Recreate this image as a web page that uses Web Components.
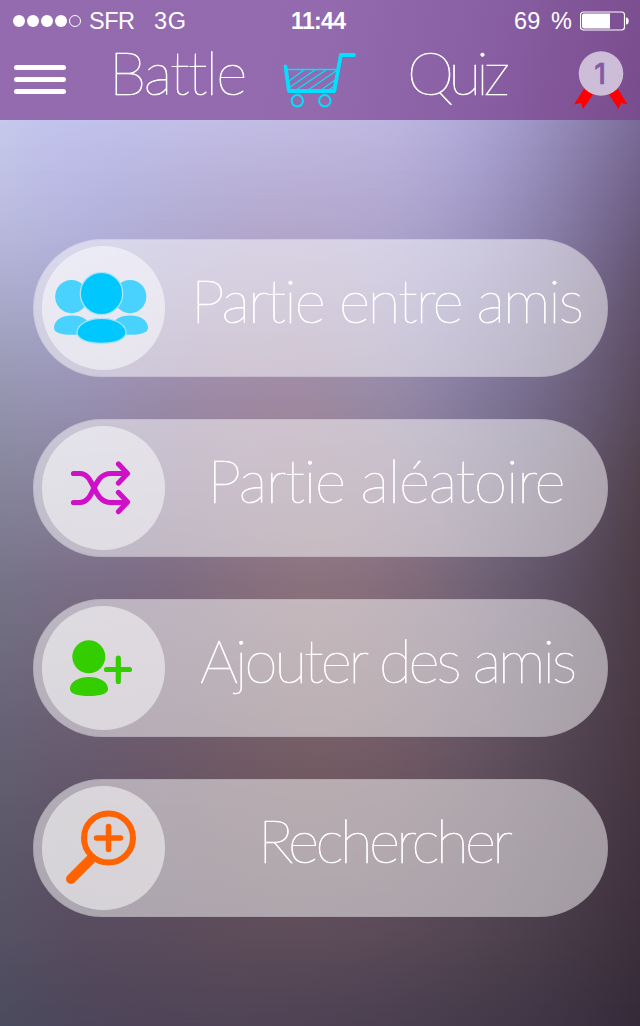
<!DOCTYPE html>
<html lang="fr">
<head>
<meta charset="utf-8">
<title>Battle Quiz</title>
<style>
html,body{margin:0;height:100%}
body{overflow:hidden;font-family:Lato,sans-serif;color:#fff}
</style>
</head>
<body>
<quiz-app></quiz-app>
<script>
const define = (name, html, setup) => customElements.define(name, class extends HTMLElement {
  connectedCallback() {
    if (this.shadowRoot) return;
    const t = document.createElement('template');
    t.innerHTML = html;
    this.attachShadow({ mode: 'open' }).append(t.content.cloneNode(true));
    if (setup) setup.call(this, this.shadowRoot);
  }
});

// Spreads the letters so that the line takes the requested width.
define('fit-text', `<style>
:host{display:block;white-space:pre;flex:none}
span{display:inline-block}
</style><span><slot></slot></span>`, function (root) {
  const s = root.querySelector('span'), w = +this.getAttribute('width');
  const n = this.textContent.length;
  s.style.letterSpacing = (w - s.getBoundingClientRect().width) / (n - 1) + 'px';
  s.style.display = 'inline';
  this.style.width = w + 'px';
});

// Soft backdrop: horizontal colour rows blended vertically into each other.
define('soft-backdrop', `<style>
:host{display:block;position:absolute;inset:0;z-index:-1}
div{position:absolute;inset:0}
</style>`, function (root) {
  const rows = [
    [120, 'c6c8ec bfc1ee c2bfe8 c2bde5 c1bae2 beb7e0 aea7d8 968cba 796b98'],
    [220, 'bbbde0 b4b3e0 b2aed6 b3a9ce b4a8cd b0a7d0 a198c6 867da8 6a5b80'],
    [310, 'a6a7c6 a9a7d0 a69cc0 aa9bb8 a899b6 a098c0 8f86ae 7a7094 604f68'],
    [400, '9494ae 9790b2 9888a6 a088a2 9d879c 948aa9 80779a 6f6684 5a4a5d'],
    [490, '84839a 8a829f 8a7a98 957f92 987f8e 8e7c92 7b7089 665a72 504049'],
    [580, '787588 7c6f88 7e6c84 877282 917780 876f7e 73657a 5e5166 4b3b46'],
    [760, '625e70 67586c 6a5767 70585f 745c62 70585f 645260 534450 473842'],
    [940, '545062 56495c 584a5b 5b4b59 5c4b59 584858 50434e 473a48 3c2f3b'],
    [1026,'4b4b5e 4d465a 4f4458 504456 4e4254 4a3f50 453a4a 3e3444 342a39']];
  const rgb = h => [0, 2, 4].map(k => parseInt(h.substr(k, 2), 16));
  // Cubic B-spline weights keep the colour transitions free of visible edges.
  const smooth = (list, p) => {
    const i = Math.floor(p), t = p - i, n = list.length - 1;
    const at = k => k < 0 ? list[0].map((v, c) => 2 * v - list[1][c])
      : k > n ? list[n].map((v, c) => 2 * v - list[n - 1][c]) : list[k];
    const w = [(1 - t) ** 3, 3 * t ** 3 - 6 * t * t + 4, -3 * t ** 3 + 3 * t * t + 3 * t + 1, t ** 3];
    return list[0].map((_, c) => w.reduce((s, f, j) => s + f * at(Math.min(i - 1 + j, n + 1))[c], 0) / 6);
  };
  const fine = rows.map(([y, c]) => {
    const list = c.split(' ').map(rgb);
    return Array.from({ length: 33 }, (_, k) => smooth(list, k / 4)).flat();
  });
  let last = 0;
  for (let k = 0; k <= 32; k++) {
    const p = k / 4, i = Math.min(Math.floor(p), 7);
    const y = rows[i][0] + (rows[i + 1][0] - rows[i][0]) * (p - i);
    const v = smooth(fine, p), stops = [];
    for (let x = 0; x < v.length; x += 3) stops.push(`rgb(${v.slice(x, x + 3).map(n => n.toFixed(1)).join(' ')})`);
    const d = document.createElement('div');
    d.style.background = `linear-gradient(90deg,${stops})`;
    if (k) d.style.maskImage = `linear-gradient(transparent ${last}px,#000 ${y}px)`;
    last = y;
    root.append(d);
  }
});

define('status-bar', `<style>
:host{display:flex;height:41px;align-items:center;box-sizing:border-box;padding:0 11px 0 13px;font:23.5px "Liberation Sans",Arial,sans-serif}
.dots{display:flex;gap:2px;margin-right:8px}
.dots i{width:12px;height:12px;border-radius:50%;background:#fff;box-sizing:border-box}
.dots i:last-child{background:none;border:1px solid #fff;width:12px}
fit-text{padding-top:1px}
.net{margin-left:19px}.time{font-weight:bold;font-size:23px;margin-left:105px}.pct{margin-left:168px;word-spacing:4px}
svg{margin-left:auto;flex:none}
</style>
<div class="dots"><i></i><i></i><i></i><i></i><i></i></div>
<fit-text width="46">SFR</fit-text><fit-text class="net" width="32">3G</fit-text>
<fit-text class="time" width="55">11:44</fit-text><fit-text class="pct" width="58">69 %</fit-text>
<svg width="49" height="20" viewBox="0 0 49 20"><rect x=".5" y="1" width="44" height="18" rx="3" fill="none" stroke="#fff" stroke-width="1.200"/><path d="M2 4.500Q2 2.500 4 2.500H30V17.500H4Q2 17.500 2 15.500ZM46 6.500C49.700 6.500 49.700 13.500 46 13.500Z" fill="#fff"/></svg>`);

define('cart-icon', `<style>:host{display:block;flex:none}svg{display:block}</style>
<svg width="74" height="58" viewBox="283 51 74 58" fill="none" stroke="#00e1ff" stroke-linecap="round" stroke-linejoin="round">
<path d="M285.500 66.500L289 91H334.300L340.800 55H354" stroke-width="3.800"/>
<path d="M287 69.500H337M289 81L304 70M290 87L315 70M296 90L326 70M308 90L336 71M321 90L335 80M329 90L334 86" stroke-width="1.300"/>
<circle cx="297.300" cy="100.700" r="5.700" stroke-width="2"/><circle cx="324.800" cy="100.700" r="5.700" stroke-width="2"/></svg>`);

define('rank-badge', `<style>
:host{display:block;width:54px;height:60px;flex:none}
svg{display:block}
svg text{font:500 28px Inter,sans-serif}
</style>
<svg width="54" height="60" viewBox="574 51 54 60"><path d="M584.500 88L593 94.500 583 109 581 103 574 104.500ZM617.500 88L609 94.500 618.500 109 621 103 627.500 104.500Z" fill="#f00"/><circle cx="601" cy="73.500" r="22.300" fill="#cdbdd8"/>
<text x="600" y="83.500" text-anchor="middle" fill="#855aa2" stroke="#855aa2" stroke-width=".6">1</text></svg>`);

define('title-bar', `<style>
:host{display:flex;height:79px;align-items:flex-start;padding:0 12px 0 14px;box-sizing:border-box}
.menu{width:52px;padding-top:24px;display:flex;flex-direction:column;gap:7px;flex:none}
.menu i{height:5px;border-radius:3px;background:#fff}
fit-text{font:100 60px/60px Lato,sans-serif;padding-top:1px;-webkit-text-stroke:.7px #fff}
.b{margin-left:43px}.q{margin-left:50px}
cart-icon{margin:10px 0 0 37px}rank-badge{margin:10px 0 0 64px}
</style>
<div class="menu"><i></i><i></i><i></i></div>
<fit-text class="b" width="137">Battle</fit-text><cart-icon></cart-icon>
<fit-text class="q" width="103">Quiz</fit-text><rank-badge></rank-badge>`);

define('menu-pill', `<style>
:host{display:flex;box-sizing:border-box;width:575px;height:138px;border-radius:69px;background:rgba(255,255,255,.5);align-items:center;position:relative}
:host::after{content:"";position:absolute;inset:0;border-radius:69px;border:1px solid rgba(120,100,150,.1)}
.disc{width:123.500px;height:123.500px;border-radius:50%;margin-left:8.500px;background:rgba(255,255,255,.5);flex:none}
.label{flex:1;display:flex;font:100 60px/60px Lato,sans-serif;padding:0 0 17px var(--start);-webkit-text-stroke:.7px #fff}
::slotted(svg){display:block;width:100%;height:100%}
</style><div class="disc"><slot name="icon"></slot></div><div class="label"><slot></slot></div>`);

define('quiz-app', `<style>
:host{display:block;position:relative;width:640px;height:1026px;overflow:hidden;isolation:isolate}
header{height:120px;background:linear-gradient(100deg,#936bae 0,#926aad 50%,#8a60a5 73%,#794c8d 100%)}
main{display:flex;flex-direction:column;gap:42px;padding:119px 0 0 33px}
</style>
<soft-backdrop></soft-backdrop>
<header><status-bar></status-bar><title-bar></title-bar></header>
<main>
<menu-pill style="--start:26px"><svg slot="icon" viewBox="42 246 123.500 123.500">
<g fill="#48d2fd"><ellipse cx="71.500" cy="296.600" rx="16.300" ry="16.600"/><ellipse cx="130" cy="296.600" rx="16.300" ry="16.600"/><path d="M54 328C54 320 62 315.500 72 315.500C82 315.500 90 320 90 328C90 333 82 334.800 72 334.800C62 334.800 54 333 54 328ZM112 328C112 320 120 315.500 130 315.500C140 315.500 148 320 148 328C148 333 140 334.800 130 334.800C120 334.800 112 333 112 328Z"/></g>
<g fill="#00c8ff" stroke="#aee5fb" stroke-width="1.300"><circle cx="101.500" cy="293.500" r="21.200"/><path d="M77 331.500C78.500 323 90 318.300 101.500 318.300S124.500 323 126 331.500C127 340 114 343.500 101.500 343.500S76 340 77 331.500Z"/></g></svg>
<fit-text width="394">Partie entre amis</fit-text></menu-pill>
<menu-pill style="--start:42.500px"><svg slot="icon" viewBox="42 426 123.500 123.500" fill="none" stroke="#d010c8" stroke-width="5.200" stroke-linecap="round" stroke-linejoin="round"><path d="M73.500 473.500H80C95 473.500 92 502.500 111 502.500H127M73.500 502.500H80C95 502.500 92 473.500 111 473.500H127M118.500 464L127.500 473.500 118.500 483M118.500 492.500L127.500 502 118.500 511.500"/></svg>
<fit-text width="359">Partie aléatoire</fit-text></menu-pill>
<menu-pill style="--start:35px"><svg slot="icon" viewBox="42 606 123.500 123.500" fill="#34ce00"><circle cx="88.800" cy="656.800" r="16.500"/><path d="M70 688C71 681 79 677 89 677S107 681 108 688C109 694 100 696 89 696S69 694 70 688Z"/><path d="M106.500 669.500H129.500M118.300 658V681.500" stroke="#34ce00" stroke-width="5.200" stroke-linecap="round"/></svg>
<fit-text width="377">Ajouter des amis</fit-text></menu-pill>
<menu-pill style="--start:93px"><svg slot="icon" viewBox="42 786 123.500 123.500" fill="none" stroke="#ff6200" stroke-linecap="round"><circle cx="108.500" cy="838" r="24.500" stroke-width="6"/><path d="M96.500 838H120.500M108.500 826.500V849.500" stroke-width="5.500"/><path d="M71 879L91 859" stroke-width="10"/></svg>
<fit-text width="255">Rechercher</fit-text></menu-pill>
</main>`);
</script>
</body>
</html>
